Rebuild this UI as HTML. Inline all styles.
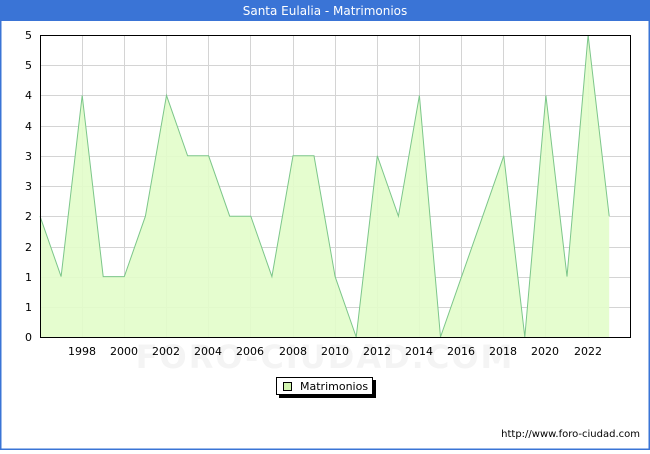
<!DOCTYPE html>
<html><head><meta charset="utf-8"><style>
body{margin:0;width:650px;height:450px;overflow:hidden;font-family:"DejaVu Sans",sans-serif;}
</style></head><body>
<svg width="650" height="450" xmlns="http://www.w3.org/2000/svg" font-family="DejaVu Sans, sans-serif">
<rect x="0" y="0" width="650" height="450" fill="#fff"/>
<rect x="0.5" y="0.5" width="649" height="449" fill="none" stroke="#3a74d6" stroke-width="2"/>
<rect x="0" y="0" width="650" height="21" fill="#3a74d6"/>
<text x="325" y="15" fill="#fff" font-size="12" text-anchor="middle">Santa Eulalia - Matrimonios</text>
<text x="325" y="368" fill="#f4f4f4" font-size="32" font-weight="bold" text-anchor="middle" letter-spacing="2">FORO-CIUDAD.COM</text>
<g stroke="#d4d4d4" stroke-width="1">
<line x1="40" y1="65.5" x2="630" y2="65.5"/><line x1="40" y1="95.5" x2="630" y2="95.5"/><line x1="40" y1="126.5" x2="630" y2="126.5"/><line x1="40" y1="156.5" x2="630" y2="156.5"/><line x1="40" y1="186.5" x2="630" y2="186.5"/><line x1="40" y1="216.5" x2="630" y2="216.5"/><line x1="40" y1="247.5" x2="630" y2="247.5"/><line x1="40" y1="277.5" x2="630" y2="277.5"/><line x1="40" y1="307.5" x2="630" y2="307.5"/>
<line x1="82.5" y1="35" x2="82.5" y2="337"/><line x1="124.5" y1="35" x2="124.5" y2="337"/><line x1="166.5" y1="35" x2="166.5" y2="337"/><line x1="208.5" y1="35" x2="208.5" y2="337"/><line x1="250.5" y1="35" x2="250.5" y2="337"/><line x1="293.5" y1="35" x2="293.5" y2="337"/><line x1="335.5" y1="35" x2="335.5" y2="337"/><line x1="377.5" y1="35" x2="377.5" y2="337"/><line x1="419.5" y1="35" x2="419.5" y2="337"/><line x1="461.5" y1="35" x2="461.5" y2="337"/><line x1="503.5" y1="35" x2="503.5" y2="337"/><line x1="545.5" y1="35" x2="545.5" y2="337"/><line x1="588.5" y1="35" x2="588.5" y2="337"/>
</g>
<polygon fill="#e2fdca" fill-opacity="0.9" points="40,337 40,216.2 61.1,276.6 82.2,95.4 103.2,276.6 124.3,276.6 145.4,216.2 166.5,95.4 187.6,155.8 208.6,155.8 229.7,216.2 250.8,216.2 271.9,276.6 293,155.8 314,155.8 335.1,276.6 356.2,337 377.3,155.8 398.4,216.2 419.4,95.4 440.5,337 461.6,276.6 482.7,216.2 503.8,155.8 524.8,337 545.9,95.4 567,276.6 588.1,35 609.2,216.2 609.2,337"/>
<polyline fill="none" stroke="#7cc68a" stroke-width="1" points="40,216.2 61.1,276.6 82.2,95.4 103.2,276.6 124.3,276.6 145.4,216.2 166.5,95.4 187.6,155.8 208.6,155.8 229.7,216.2 250.8,216.2 271.9,276.6 293,155.8 314,155.8 335.1,276.6 356.2,337 377.3,155.8 398.4,216.2 419.4,95.4 440.5,337 461.6,276.6 482.7,216.2 503.8,155.8 524.8,337 545.9,95.4 567,276.6 588.1,35 609.2,216.2"/>
<rect x="40.5" y="35.5" width="590" height="302" fill="none" stroke="#000" stroke-width="1"/>
<g font-size="11" fill="#000" text-anchor="end">
<text x="32" y="341">0</text><text x="32" y="311">1</text><text x="32" y="281">1</text><text x="32" y="251">2</text><text x="32" y="220">2</text><text x="32" y="190">3</text><text x="32" y="160">3</text><text x="32" y="130">4</text><text x="32" y="99">4</text><text x="32" y="69">5</text><text x="32" y="39">5</text>
</g>
<g font-size="11" fill="#000" text-anchor="middle">
<text x="82" y="355">1998</text><text x="124" y="355">2000</text><text x="166" y="355">2002</text><text x="208" y="355">2004</text><text x="250" y="355">2006</text><text x="293" y="355">2008</text><text x="335" y="355">2010</text><text x="377" y="355">2012</text><text x="419" y="355">2014</text><text x="461" y="355">2016</text><text x="503" y="355">2018</text><text x="545" y="355">2020</text><text x="588" y="355">2022</text>
</g>
<rect x="279" y="380" width="97" height="18" fill="#000"/>
<rect x="276.5" y="377.5" width="96" height="17" fill="#fff" stroke="#000"/>
<rect x="283.5" y="382.5" width="8" height="8" fill="#d2f5b0" stroke="#000"/>
<text x="300" y="390" font-size="11" fill="#000">Matrimonios</text>
<text x="640" y="437" font-size="10" fill="#000" text-anchor="end">http://www.foro-ciudad.com</text>
</svg>
</body></html>
